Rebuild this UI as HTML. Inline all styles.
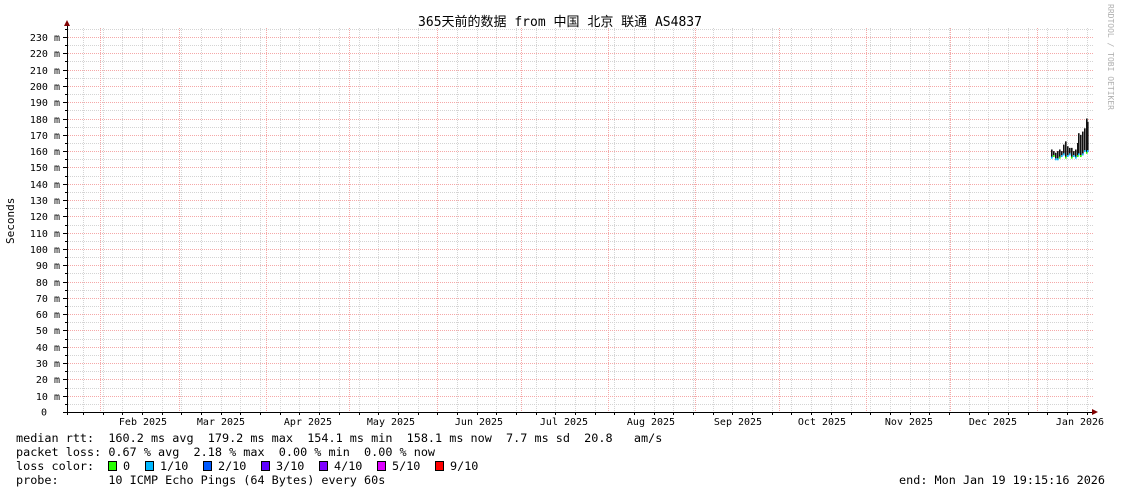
<!DOCTYPE html>
<html><head><meta charset="utf-8"><style>
html,body{margin:0;padding:0;background:#fff;width:1121px;height:494px;overflow:hidden}
svg{display:block}
line{shape-rendering:crispEdges}
text{font-family:"DejaVu Sans Mono","Liberation Mono","Noto Sans CJK SC",monospace;fill:#000;white-space:pre}
</style></head><body>
<svg width="1121" height="494" xmlns="http://www.w3.org/2000/svg">
<rect width="1121" height="494" fill="#fff"/>
<g id="grid"></g>
<g id="grid2"></g>
<text x="560" y="26" font-size="13" text-anchor="middle" style="font-family:'DejaVu Sans Mono','Noto Sans CJK SC',monospace">365天前的数据 from 中国 北京 联通 AS4837</text>
<text x="0" y="0" font-size="11" transform="translate(14,244) rotate(-90)">Seconds</text>
<text x="0" y="0" font-size="8" style="fill:#b0b0b0" transform="translate(1108,4) rotate(90)">RRDTOOL / TOBI OETIKER</text>
<g id="yl" font-size="10" text-anchor="end"></g>
<g id="xl" font-size="10" text-anchor="middle"></g>
<g id="data"></g>
<line x1="67.5" y1="24" x2="67.5" y2="415" stroke="#000"/>
<line x1="63" y1="412.5" x2="1094" y2="412.5" stroke="#000"/>
<path d="M64 26 L67 20 L70 26Z" fill="#800000"/>
<path d="M1092 409 L1098 412 L1092 415Z" fill="#800000"/>
<g font-size="11.8">
<text x="16" y="442">median rtt:  160.2 ms avg  179.2 ms max  154.1 ms min  158.1 ms now  7.7 ms sd  20.8   am/s</text>
<text x="16" y="456">packet loss: 0.67 % avg  2.18 % max  0.00 % min  0.00 % now</text>
<text x="16" y="470">loss color:  </text>
<text x="16" y="484">probe:       10 ICMP Echo Pings (64 Bytes) every 60s</text>
<text x="1105" y="484" text-anchor="end">end: Mon Jan 19 19:15:16 2026</text>
</g>
<g font-size="11.8">
<rect x="108.5" y="461.5" width="8" height="9" fill="#26ff00" stroke="#000"/><text x="123" y="470">0</text>
<rect x="145.5" y="461.5" width="8" height="9" fill="#00b8ff" stroke="#000"/><text x="160" y="470">1/10</text>
<rect x="203.5" y="461.5" width="8" height="9" fill="#0059ff" stroke="#000"/><text x="218" y="470">2/10</text>
<rect x="261.5" y="461.5" width="8" height="9" fill="#5e00ff" stroke="#000"/><text x="276" y="470">3/10</text>
<rect x="319.5" y="461.5" width="8" height="9" fill="#7e00ff" stroke="#000"/><text x="334" y="470">4/10</text>
<rect x="377.5" y="461.5" width="8" height="9" fill="#dd00ff" stroke="#000"/><text x="392" y="470">5/10</text>
<rect x="435.5" y="461.5" width="8" height="9" fill="#ff0000" stroke="#000"/><text x="450" y="470">9/10</text>
</g>
</svg>
<script>
const NS="http://www.w3.org/2000/svg";
function el(p,t,a,txt){const e=document.createElementNS(NS,t);for(const k in a)e.setAttribute(k,a[k]);if(txt!==undefined)e.textContent=txt;document.getElementById(p).appendChild(e);return e;}
const y0=412,s=1.6304;
for(let v=5;v<=235;v+=5){const y=Math.round(y0-v*s)+0.5;
 const major=v%10===0;
 el(major?'grid2':'grid','line',{x1:68,x2:1093,y1:y,y2:y,stroke:major?'#f5a8a8':'#d4d4d4','stroke-dasharray':'1,1'});
 if(major){el('grid2','line',{x1:63,x2:67,y1:y,y2:y,stroke:'#000'});el('yl','text',{x:60,y:y+3.5},v+' m');}
 else el('grid2','line',{x1:65,x2:67,y1:y,y2:y,stroke:'#000'});
}
el('yl','text',{x:47,y:y0+3.5},'0');
for(let x=83;x<1093;x+=19.68){const xx=Math.round(x)+0.5;el('grid','line',{x1:xx,x2:xx,y1:28,y2:412,stroke:'#d4d4d4','stroke-dasharray':'1,1'});el('grid2','line',{x1:xx,x2:xx,y1:412,y2:415,stroke:'#000'});}
[100,179,266,349,437,521,608,695,779,866,950,1037].forEach(x=>{
 for(let y=28;y<412;y+=2) el('grid2','rect',{x:x,y:y,width:1,height:1,fill:'#f5a8a8'});
});
const m=[["Feb 2025",143],["Mar 2025",221],["Apr 2025",308],["May 2025",391],["Jun 2025",479],["Jul 2025",564],["Aug 2025",651],["Sep 2025",738],["Oct 2025",822],["Nov 2025",909],["Dec 2025",993],["Jan 2026",1080]];
m.forEach(([t,x])=>el('xl','text',{x:x,y:425},t));
const d=[[1051,156,161],[1053,157,160],[1055,155,159],[1057,155,160],[1059,156,161],[1061,157,160],[1063,158,164],[1065,156,166],[1067,157,163],[1069,158,162],[1071,156,162],[1073,157,160],[1075,156,161],[1077,157,165],[1078,158,171],[1080,157,170],[1082,158,172],[1084,160,174],[1086,159,180],[1087,160,178]];
d.forEach(([x,a,b])=>{el('data','rect',{x:x,y:y0-b*s,width:1.6,height:(b-a)*s,fill:'#111'});el('data','rect',{x:x,y:y0-a*s-1,width:1.6,height:2,fill:(x%3?'#00b8ff':'#26ff00')});});
</script>
</body></html>
